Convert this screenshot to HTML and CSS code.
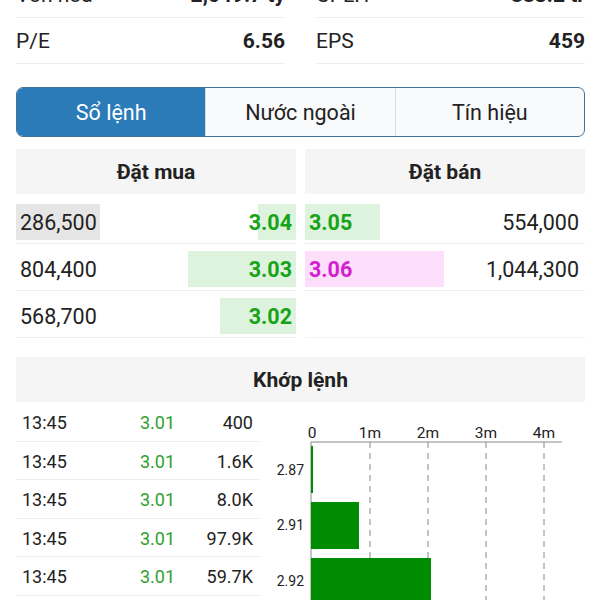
FILE: index.html
```html
<!DOCTYPE html>
<html lang="vi">
<head>
  <meta charset="UTF-8">
  <meta name="viewport" content="width=device-width, initial-scale=1.0">
  <title>Sổ lệnh</title>
  <link rel="stylesheet" href="styles.css">
</head>
<body>
  <div class="page">
    <!-- Stock stats -->
    <div class="stats">
      <div class="stat-row"><span class="stat-label">Vốn hóa</span><span class="stat-value">2,649.7 tỷ</span></div>
      <div class="stat-row"><span class="stat-label">CPLH</span><span class="stat-value">883.2 tr</span></div>
      <div class="stat-row"><span class="stat-label">P/E</span><span class="stat-value">6.56</span></div>
      <div class="stat-row"><span class="stat-label">EPS</span><span class="stat-value">459</span></div>
    </div>

    <!-- Tabs -->
    <div class="tabs">
      <div class="tab active">Sổ lệnh</div>
      <div class="tab">Nước ngoài</div>
      <div class="tab">Tín hiệu</div>
    </div>

    <!-- Order book -->
    <div class="book">
      <div class="book-side buy">
        <div class="section-head">Đặt mua</div>
        <div class="book-row">
          <span class="qty flash">286,500</span>
          <span class="bar up" style="width: 38px">3.04</span>
        </div>
        <div class="book-row">
          <span class="qty">804,400</span>
          <span class="bar up" style="width: 108px">3.03</span>
        </div>
        <div class="book-row">
          <span class="qty">568,700</span>
          <span class="bar up" style="width: 76px">3.02</span>
        </div>
      </div>
      <div class="book-side sell">
        <div class="section-head">Đặt bán</div>
        <div class="book-row">
          <span class="bar up" style="width: 75px">3.05</span>
          <span class="qty">554,000</span>
        </div>
        <div class="book-row">
          <span class="bar ceil" style="width: 139px">3.06</span>
          <span class="qty">1,044,300</span>
        </div>
        <div class="book-row empty"></div>
      </div>
    </div>

    <!-- Matched orders -->
    <div class="matched">
      <div class="section-head">Khớp lệnh</div>
      <div class="matched-body">
        <div class="trades">
          <div class="trade"><span class="t-time">13:45</span><span class="t-price">3.01</span><span class="t-vol">400</span></div>
          <div class="trade"><span class="t-time">13:45</span><span class="t-price">3.01</span><span class="t-vol">1.6K</span></div>
          <div class="trade"><span class="t-time">13:45</span><span class="t-price">3.01</span><span class="t-vol">8.0K</span></div>
          <div class="trade"><span class="t-time">13:45</span><span class="t-price">3.01</span><span class="t-vol">97.9K</span></div>
          <div class="trade"><span class="t-time">13:45</span><span class="t-price">3.01</span><span class="t-vol">59.7K</span></div>
        </div>
        <div class="chart">
          <svg width="325" height="200" viewBox="0 0 325 200">
            <g class="axis-x">
              <text x="52" y="35">0</text>
              <text x="110" y="35">1m</text>
              <text x="168" y="35">2m</text>
              <text x="226" y="35">3m</text>
              <text x="284" y="35">4m</text>
            </g>
            <g class="grid">
              <line x1="110" y1="39" x2="110" y2="200"/>
              <line x1="168" y1="39" x2="168" y2="200"/>
              <line x1="226" y1="39" x2="226" y2="200"/>
              <line x1="284" y1="39" x2="284" y2="200"/>
            </g>
            <line class="axis" x1="51" y1="39" x2="302" y2="39"/>
            <line class="axis" x1="51" y1="39" x2="51" y2="200"/>
            <g class="bars">
              <rect x="51" y="43" width="2" height="47"/>
              <rect x="51" y="99" width="48" height="47"/>
              <rect x="51" y="155" width="120" height="47"/>
            </g>
            <g class="axis-y">
              <text x="44" y="72">2.87</text>
              <text x="44" y="127">2.91</text>
              <text x="44" y="183">2.92</text>
            </g>
          </svg>
        </div>
      </div>
    </div>
  </div>
</body>
</html>
```

FILE: styles.css
```css
* {
  margin: 0;
  padding: 0;
  box-sizing: border-box;
}

body {
  font-family: Roboto, 'Noto Sans', 'Liberation Sans', sans-serif;
  background-color: #fff;
  color: #222;
  overflow: hidden;
}

.page {
  padding: 0 15px 0 16px;
}

/* Stats */
.stats {
  display: grid;
  grid-template-columns: 269px 269px;
  column-gap: 31px;
  margin-top: -28px;
}

.stat-row {
  display: flex;
  justify-content: space-between;
  align-items: center;
  height: 46px;
  font-size: 21px;
  border-bottom: 1px solid #eee;
}

.stat-value {
  font-weight: 700;
}

/* Tabs */
.tabs {
  display: flex;
  height: 50px;
  margin-top: 23px;
  border: 1px solid #44729a;
  border-radius: 7px;
  overflow: hidden;
  background-color: #f8fafc;
}

.tab {
  flex: 1;
  display: flex;
  align-items: center;
  justify-content: center;
  font-size: 21.5px;
  color: #222;
  border-left: 1px solid #d6dde4;
}

.tab:first-child {
  border-left: none;
}

.tab.active {
  background-color: #2b7bb9;
  color: #fff;
}

/* Section headers */
.section-head {
  height: 45px;
  display: flex;
  align-items: center;
  justify-content: center;
  background-color: #f5f5f5;
  font-size: 21px;
  font-weight: 700;
}

/* Order book */
.book {
  display: grid;
  grid-template-columns: 280px 280px;
  column-gap: 9px;
  margin-top: 12px;
}

.book-side .section-head {
  margin-bottom: 3px;
}

.book-row {
  display: flex;
  justify-content: space-between;
  align-items: center;
  height: 47px;
  padding: 7px 0 3px;
  font-size: 21.5px;
  border-bottom: 1px solid #eee;
}

.book-row.empty {
  border-bottom-color: #f3f3f3;
}

.qty {
  display: flex;
  align-items: center;
  height: 100%;
  padding: 0 4px;
}

.qty.flash {
  width: 84px;
  background-color: #e6e6e6;
}

.sell .qty {
  padding-right: 6px;
}

.bar {
  display: flex;
  align-items: center;
  height: 100%;
  font-weight: 700;
}

.buy .bar {
  justify-content: flex-end;
  padding-right: 4px;
}

.sell .bar {
  justify-content: flex-start;
  padding-left: 4px;
}

.bar.up {
  background-color: #def3de;
  color: #17a317;
}

.bar.ceil {
  background-color: #fddffb;
  color: #d21ed0;
}

/* Matched orders */
.matched {
  margin-top: 19px;
}

.matched-body {
  display: flex;
  padding-top: 1px;
}

.trades {
  width: 244px;
}

.trade {
  display: flex;
  align-items: center;
  height: 38.5px;
  padding: 2px 7px 0 6px;
  font-size: 18px;
  border-bottom: 1px solid #eee;
}

.t-time {
  width: 118px;
}

.t-price {
  color: #2fa12f;
}

.t-vol {
  flex: 1;
  text-align: right;
}

.chart svg {
  display: block;
}

.axis-x text {
  font-size: 15.5px;
  text-anchor: middle;
  fill: #222;
}

.axis-y text {
  font-size: 14px;
  text-anchor: end;
  fill: #222;
}

.grid line {
  stroke: #888;
  stroke-width: 1;
  stroke-dasharray: 6 5;
}

.axis {
  stroke: #888;
  stroke-width: 1;
}

.bars rect {
  fill: #008c00;
}
```
